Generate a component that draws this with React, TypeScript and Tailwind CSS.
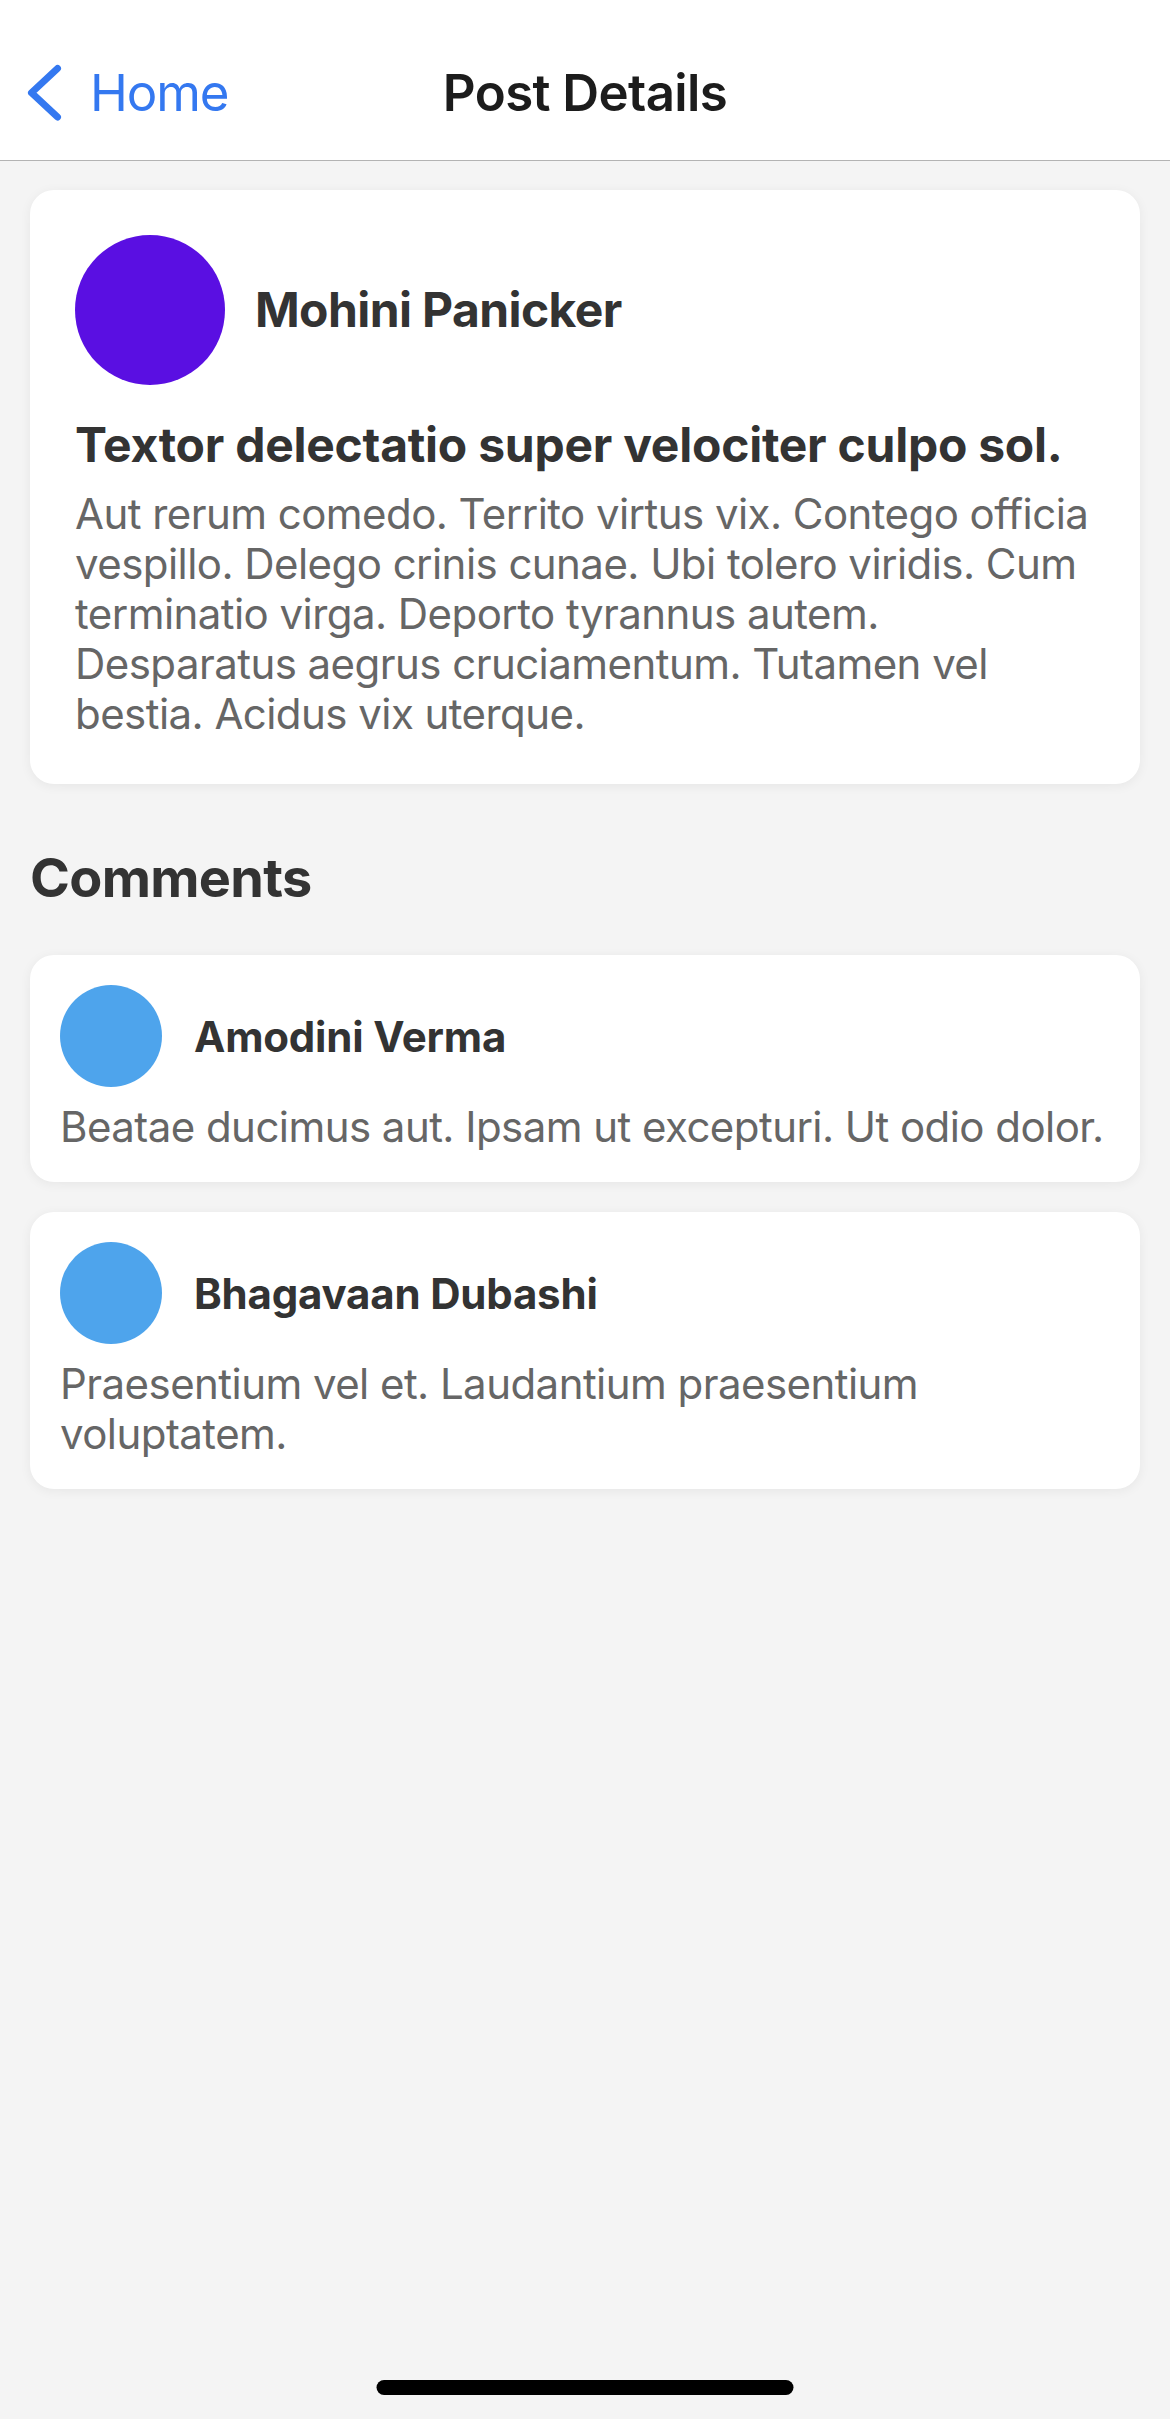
import React from "react";

const font = { fontFamily: "Inter, 'Noto Sans', sans-serif" };

function Chevron() {
  return (
    <svg width="40" height="64" viewBox="0 0 40 64" fill="none" className="block">
      <path d="M33.5 7.5 L7.5 31.75 L33.5 56" stroke="#3478f0" strokeWidth="7" strokeLinecap="round" strokeLinejoin="round" />
    </svg>
  );
}

function Comment({ name, text }: { name: string; text: string }) {
  return (
    <div className="rounded-[24px] bg-white p-[30px] shadow-[0_2px_12px_rgba(0,0,0,0.06)]">
      <div className="flex items-center">
        <div className="h-[102px] w-[102px] shrink-0 rounded-full bg-[#4ea4ec]" />
        <div className="ml-[32px] text-[42px] font-bold leading-[51px] tracking-[-0.2px] text-[#333333]">{name}</div>
      </div>
      <p className="mt-[15px] text-[42px] leading-[50px] tracking-[-0.55px] text-[#666666]">{text}</p>
    </div>
  );
}

export default function App() {
  return (
    <div className="relative min-h-[2419px] w-full bg-[#f4f4f4]" style={font}>
      <header className="grid h-[161px] grid-cols-[1fr_auto_1fr] items-center border-b border-[#b3b3b3] bg-white pb-[1px] pt-[26px]">
        <div className="flex items-center">
          <div className="ml-[24px]">
            <Chevron />
          </div>
          <span className="ml-[26px] text-[51px] leading-[62px] tracking-[-1.1px] text-[#3478f0]">Home</span>
        </div>
        <div className="text-[51px] font-semibold leading-[62px] tracking-[-0.6px] text-[#1c1c1c]">Post Details</div>
        <div />
      </header>

      <main className="px-[30px] pt-[29px]">
        <section className="rounded-[24px] bg-white p-[45px] shadow-[0_2px_12px_rgba(0,0,0,0.06)]">
          <div className="flex items-center">
            <div className="h-[150px] w-[150px] shrink-0 rounded-full bg-[#5a0fe2]" />
            <div className="ml-[30px] text-[48px] font-bold leading-[58px] tracking-[-0.6px] text-[#333333]">Mohini Panicker</div>
          </div>
          <h1 className="mt-[31px] text-[48px] font-bold leading-[58px] tracking-[-0.25px] text-[#333333]">
            Textor delectatio super velociter culpo sol.
          </h1>
          <p className="mt-[15px] text-[42px] leading-[50px] tracking-[-0.55px] text-[#666666]">
            Aut rerum comedo. Territo virtus vix. Contego officia vespillo. Delego crinis cunae. Ubi tolero viridis. Cum terminatio virga. Deporto tyrannus autem. Desparatus aegrus cruciamentum. Tutamen vel bestia. Acidus vix uterque.
          </p>
        </section>

        <h2 className="mb-[45px] mt-[62px] text-[54px] font-bold leading-[64px] tracking-[-0.7px] text-[#333333]">Comments</h2>

        <div className="flex flex-col gap-[30px]">
          <Comment name="Amodini Verma" text="Beatae ducimus aut. Ipsam ut excepturi. Ut odio dolor." />
          <Comment name="Bhagavaan Dubashi" text="Praesentium vel et. Laudantium praesentium voluptatem." />
        </div>
      </main>

      <div className="absolute bottom-[24px] left-1/2 h-[15px] w-[417px] -translate-x-1/2 rounded-full bg-black" />
    </div>
  );
}
